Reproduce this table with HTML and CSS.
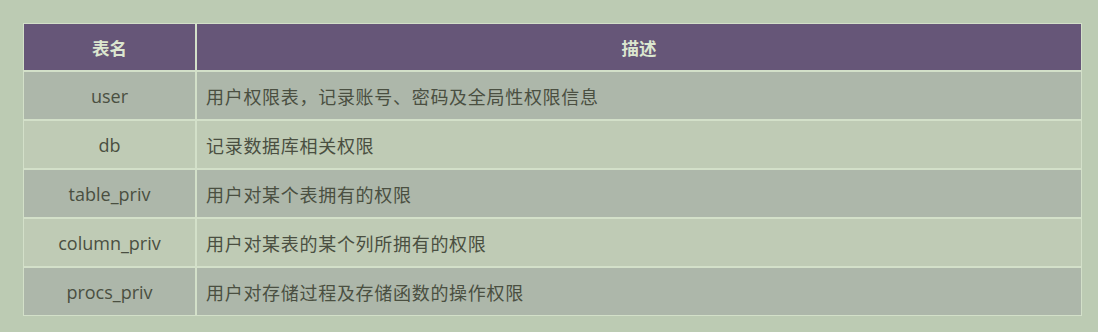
FILE: index.html
```html
<!DOCTYPE html>
<html lang="zh">
<head>
<meta charset="utf-8">
<link rel="stylesheet" href="styles.css">
</head>
<body>
<div class="wrap">
<table class="priv">
<thead>
<tr><th class="c1">表名</th><th>描述</th></tr>
</thead>
<tbody>
<tr class="odd"><td class="c1">user</td><td>用户权限表，记录账号、密码及全局性权限信息</td></tr>
<tr class="even"><td class="c1">db</td><td>记录数据库相关权限</td></tr>
<tr class="odd"><td class="c1">table_priv</td><td>用户对某个表拥有的权限</td></tr>
<tr class="even"><td class="c1">column_priv</td><td>用户对某表的某个列所拥有的权限</td></tr>
<tr class="odd"><td class="c1">procs_priv</td><td>用户对存储过程及存储函数的操作权限</td></tr>
</tbody>
</table>
</div>
</body>
</html>
```
FILE: styles.css
```css
html, body {
  margin: 0;
  padding: 0;
  background: #bccbb3;
}
.wrap {
  padding: 23px 16px 0 23px;
}
.priv {
  width: 1059px;
  border-collapse: separate;
  border-spacing: 0;
  font-family: "Open Sans", "Noto Sans CJK SC", sans-serif;
  font-size: 18px;
  color: #4a4f41;
}
.priv th, .priv td {
  border: 1px solid #d3e0c9;
  height: 47px;
  padding: 0 0 0 9px;
  text-align: left;
  vertical-align: middle;
}
.priv th {
  height: 46px;
  padding: 0;
  background: #665678;
  color: #dbe6cf;
  font-family: "Noto Sans CJK SC", sans-serif;
  font-weight: 700;
  font-size: 17.5px;
  text-align: center;
}
.priv .c1 {
  width: 171px;
  text-align: center;
  padding: 0;
}
.priv tr.odd td {
  background: #adb7aa;
}
.priv tr.even td {
  background: #bfcbb5;
}
.priv td:not(.c1) {
  font-family: "Noto Sans CJK SC", sans-serif;
  font-size: 18px;
  letter-spacing: 0.7px;
}
```
